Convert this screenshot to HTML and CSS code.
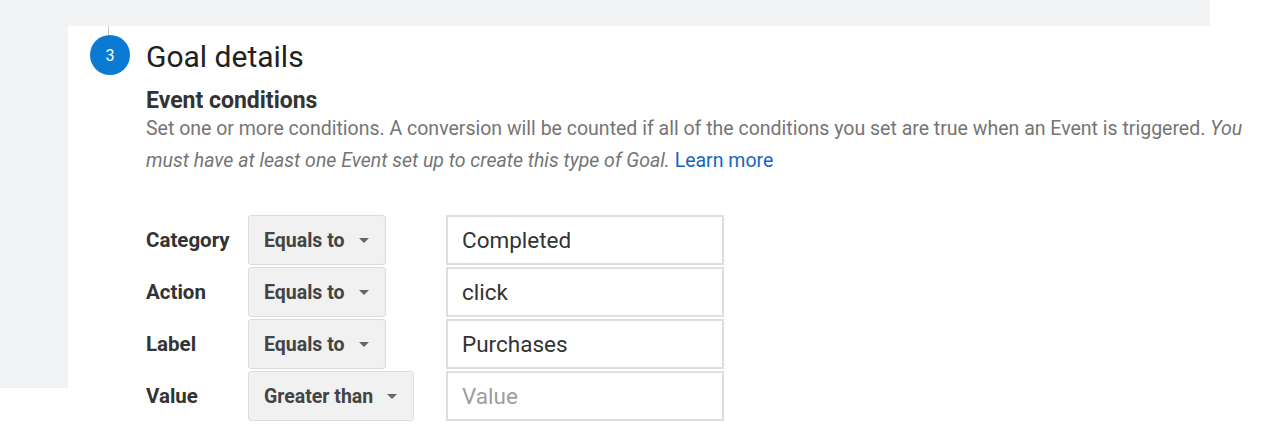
FILE: index.html
```html
<!DOCTYPE html>
<html>
<head>
<meta charset="utf-8">
<link rel="stylesheet" href="styles.css">
</head>
<body>
<div class="page">
  <section class="panel">
    <div class="step-head">
      <div class="step-marker">
        <span class="step-line"></span>
        <span class="step-num">3</span>
      </div>
      <h2 class="step-title">Goal details</h2>
    </div>
    <div class="step-body">
      <h3 class="sub-title">Event conditions</h3>
      <p class="desc">Set one or more conditions. A conversion will be counted if all of the conditions you set are true when an Event is triggered. <em>You must have at least one Event set up to create this type of Goal.</em> <a class="link" href="#">Learn more</a></p>
      <div class="conditions">
        <div class="cond-label">Category</div>
        <div class="cond-select"><span class="sel">Equals to<span class="caret"></span></span></div>
        <div class="cond-input">Completed</div>

        <div class="cond-label">Action</div>
        <div class="cond-select"><span class="sel">Equals to<span class="caret"></span></span></div>
        <div class="cond-input">click</div>

        <div class="cond-label">Label</div>
        <div class="cond-select"><span class="sel">Equals to<span class="caret"></span></span></div>
        <div class="cond-input">Purchases</div>

        <div class="cond-label">Value</div>
        <div class="cond-select"><span class="sel">Greater than<span class="caret"></span></span></div>
        <div class="cond-input placeholder">Value</div>
      </div>
    </div>
  </section>
</div>
</body>
</html>
```

FILE: styles.css
```css
html {
  overflow: hidden;
}

body {
  margin: 0;
  padding: 0;
  background: #ffffff;
  font-family: Roboto, "Noto Sans", Arial, sans-serif;
}

.page {
  width: 1274px;
  height: 437px;
  padding: 26px 0 0 68px;
  box-sizing: border-box;
  background: linear-gradient(#f2f3f5, #f2f3f5) no-repeat 0 0 / 1210px 388px, #ffffff;
}

.panel {
  height: 411px;
  background: #ffffff;
}

.step-head {
  display: flex;
  align-items: center;
  padding-left: 22px;
  height: 58px;
}

.step-marker {
  position: relative;
  width: 40px;
  height: 40px;
}

.step-line {
  position: absolute;
  left: 18px;
  top: -9px;
  width: 1px;
  height: 9px;
  background: #c8c8c8;
}

.step-num {
  display: flex;
  align-items: center;
  justify-content: center;
  width: 40px;
  height: 40px;
  border-radius: 50%;
  background: #0b7ad3;
  color: #ffffff;
  font-size: 16px;
}

.step-title {
  margin: 4px 0 0 16px;
  font-size: 30px;
  font-weight: 400;
  color: #212121;
  line-height: 40px;
}

.step-body {
  padding-left: 78px;
}

.sub-title {
  margin: 2px 0 0;
  font-size: 23px;
  font-weight: 700;
  color: #333333;
  line-height: 30px;
}

.desc {
  margin: -3px 0 0;
  font-size: 19.5px;
  line-height: 32px;
  color: #757575;
  width: 1110px;
}

.desc em {
  font-style: italic;
}

.link {
  color: #1565c0;
  text-decoration: none;
}

.conditions {
  display: grid;
  grid-template-columns: 102px 198px 278px;
  grid-auto-rows: 50px;
  row-gap: 2px;
  margin-top: 38px;
  align-items: center;
}

.cond-label {
  font-size: 20.5px;
  font-weight: 700;
  color: #333333;
}

.cond-select {
  height: 100%;
  display: flex;
}

.sel {
  display: flex;
  align-items: center;
  height: 100%;
  box-sizing: border-box;
  padding: 0 16px 0 15px;
  background: #f1f1f1;
  border: 1px solid #dcdcdc;
  border-radius: 3px;
  font-size: 19.5px;
  font-weight: 700;
  color: #444444;
}

.caret {
  width: 0;
  height: 0;
  margin-left: 14px;
  border-left: 5px solid transparent;
  border-right: 5px solid transparent;
  border-top: 5px solid #666666;
}

.cond-input {
  height: 100%;
  box-sizing: border-box;
  border: 2px solid #dedede;
  display: flex;
  align-items: center;
  padding-left: 14px;
  font-size: 22.5px;
  color: #333333;
}

.cond-input.placeholder {
  color: #9e9e9e;
}
```
